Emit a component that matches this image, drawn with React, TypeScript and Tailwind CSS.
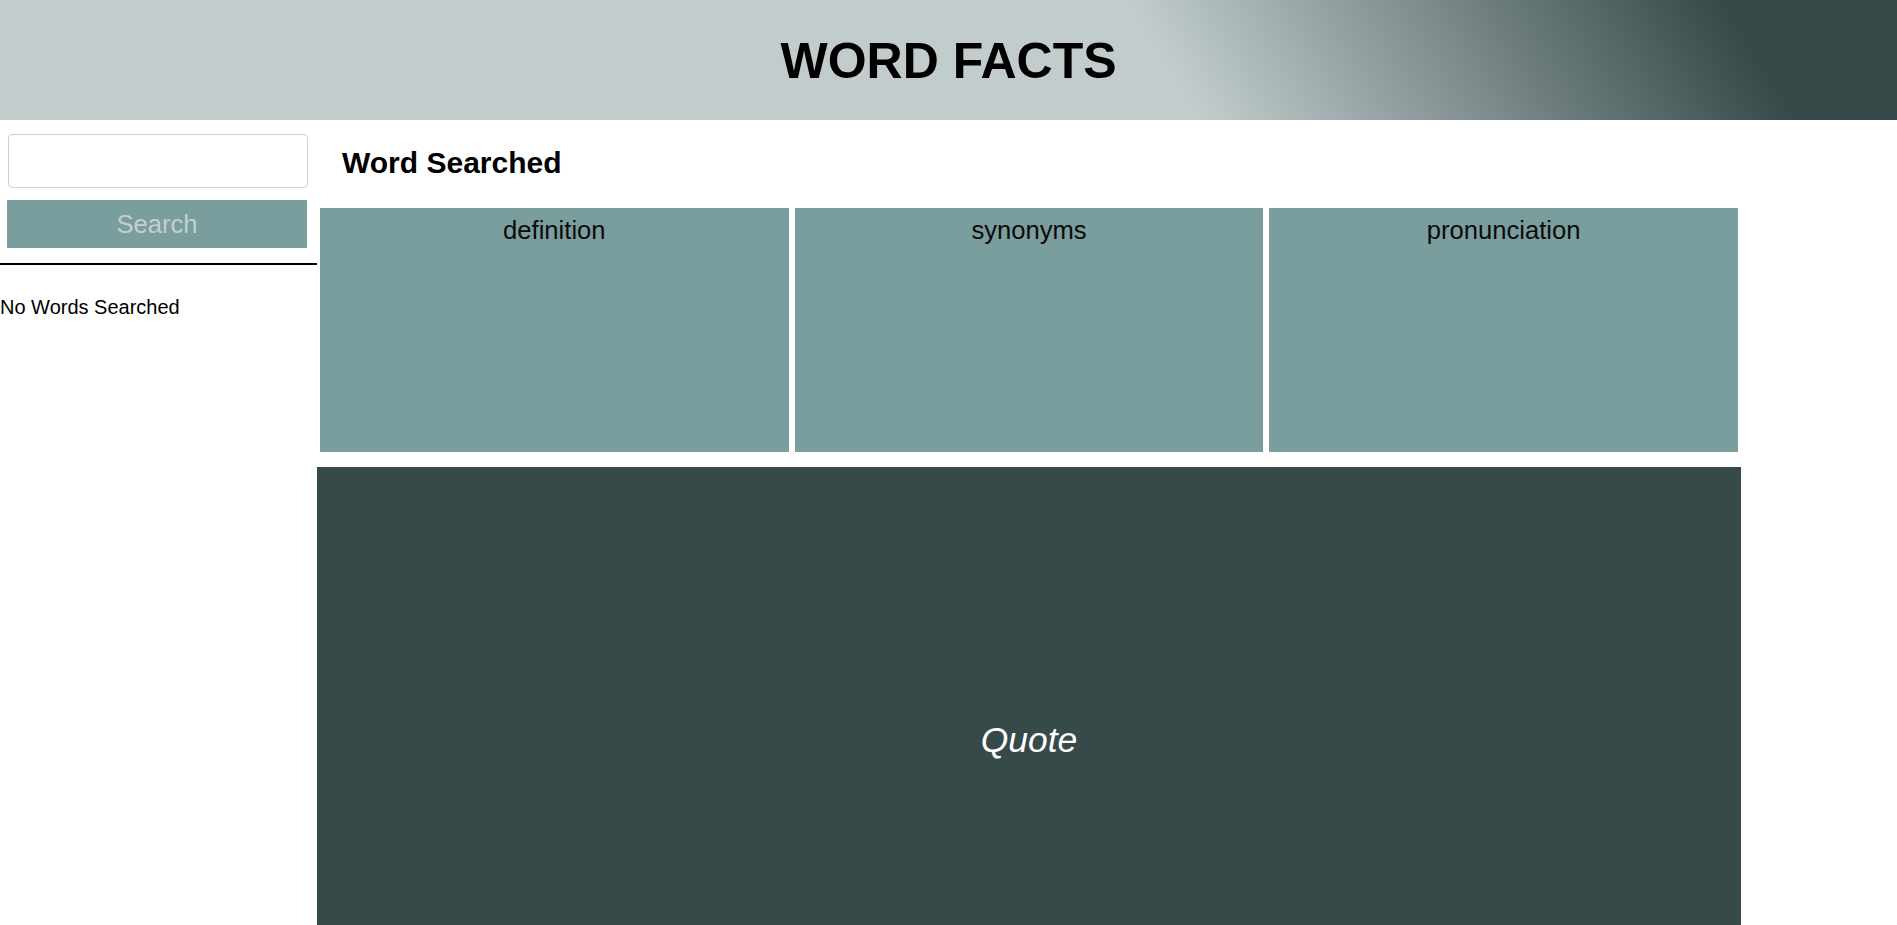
import React from "react";

export default function App() {
  const font = { fontFamily: '"Liberation Sans", Arial, sans-serif' };
  return (
    <div className="min-h-screen bg-white text-black" style={font}>
      <header className="h-[120px] flex items-center justify-center pt-[1px] bg-[linear-gradient(58deg,#c2cccd_61%,#364a4a_91%)]">
        <h1 className="text-[50px] font-bold leading-none text-black">WORD FACTS</h1>
      </header>
      <div className="flex">
        <aside className="w-[317px] shrink-0 pt-[14px]">
          <input
            type="text"
            className="ml-[8px] block w-[300px] h-[54px] rounded-[4px] border border-[#cfcfcf] bg-white outline-none"
          />
          <button className="ml-[7px] mt-[12px] block w-[300px] h-[48px] pt-[2px] bg-[#7a9d9e] text-[25.6px] text-[#c5cfcf] leading-none">
            Search
          </button>
          <div className="mt-[15px] h-[2px] w-[317px] bg-black" />
          <p className="mt-[31px] text-[20px] leading-[23px]">No Words Searched</p>
        </aside>
        <main className="w-[1424px] shrink-0">
          <h2 className="mt-[26px] mb-[26px] pl-[25px] text-[30px] font-bold leading-[33px]">Word Searched</h2>
          <div className="flex">
            {["definition", "synonyms", "pronunciation"].map((t) => (
              <div key={t} className="m-[3px] flex-1 h-[244px] bg-[#7a9d9e] pt-[8px] text-center text-[25.6px] leading-[29px] text-[#0a0a0a]">
                {t}
              </div>
            ))}
          </div>
          <div className="mt-[12px] h-[547px] bg-[#364a4a] flex items-center justify-center">
            <span className="italic text-white text-[35.5px]">Quote</span>
          </div>
        </main>
      </div>
    </div>
  );
}
